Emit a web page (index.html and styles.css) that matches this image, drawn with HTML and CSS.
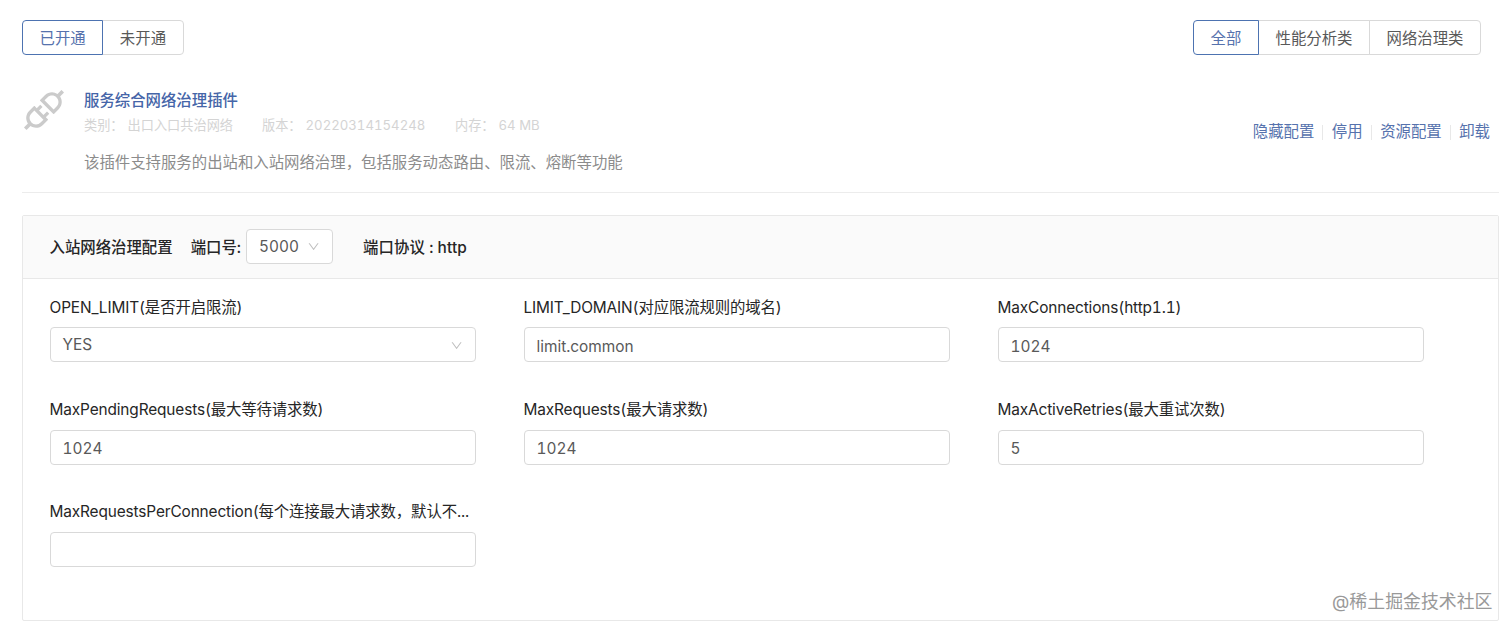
FILE: index.html
```
<!DOCTYPE html>
<html lang="zh-CN">
<head>
<meta charset="UTF-8">
<meta name="viewport" content="width=device-width, initial-scale=1.0">
<link rel="stylesheet" href="styles.css">
<title>插件</title>
</head>
<body>

  <header class="toolbar">
    <div class="tabs">
      <button class="tab tab-state active">已开通</button>
      <button class="tab tab-state">未开通</button>
    </div>
    <div class="tabs">
      <button class="tab tab-all active">全部</button>
      <button class="tab tab-type">性能分析类</button>
      <button class="tab tab-type">网络治理类</button>
    </div>
  </header>

  <section class="plugin">
    <svg class="plugin-icon" viewBox="0 0 1024 1024"><path d="M917.7 148.8l-42.4-42.4c-1.6-1.6-3.6-2.3-5.7-2.3s-4.1.8-5.7 2.3l-76.1 76.1a199.27 199.27 0 00-112.1-34.3c-51.2 0-102.4 19.5-141.5 58.6L432.3 308.7a8.03 8.03 0 000 11.3L704 591.7c1.6 1.6 3.6 2.3 5.7 2.3 2 0 4.1-.8 5.7-2.3l101.9-101.9c68.9-69 77-175.7 24.3-253.5l76.1-76.1c3.1-3.2 3.1-8.3 0-11.4zM769.1 441.7l-59.4 59.4-186.8-186.8 59.4-59.4c24.9-24.9 58.1-38.7 93.4-38.7 35.3 0 68.4 13.7 93.4 38.7 24.9 24.9 38.7 58.1 38.7 93.4 0 35.3-13.8 68.4-38.7 93.4zm-190.2 105a8.03 8.03 0 00-11.3 0L501 613.3 410.7 523l66.7-66.7c3.1-3.1 3.1-8.2 0-11.3L441 408.6a8.03 8.03 0 00-11.3 0L363 475.3l-43-43a7.85 7.85 0 00-5.7-2.3c-2 0-4.1.8-5.7 2.3L206.8 534.2c-68.9 69-77 175.7-24.3 253.5l-76.1 76.1a8.03 8.03 0 000 11.3l42.4 42.4c1.6 1.6 3.6 2.3 5.7 2.3s4.1-.8 5.7-2.3l76.1-76.1c33.7 22.9 72.9 34.3 112.1 34.3 51.2 0 102.4-19.5 141.5-58.6l101.9-101.9c3.1-3.1 3.1-8.2 0-11.3l-43-43 66.7-66.7c3.1-3.1 3.1-8.2 0-11.3l-36.6-36.2zM441.7 769.1a131.32 131.32 0 01-93.4 38.7c-35.3 0-68.4-13.7-93.4-38.7a131.32 131.32 0 01-38.7-93.4c0-35.3 13.7-68.4 38.7-93.4l59.4-59.4 186.8 186.8-59.4 59.4z"/></svg>
    <div class="plugin-info">
      <div class="plugin-name">服务综合网络治理插件</div>
      <div class="plugin-meta">
        <span class="meta-type"><span class="meta-key">类别：</span>出口入口共治网络</span>
        <span class="meta-version"><span class="meta-key">版本：</span>20220314154248</span>
        <span><span class="meta-key">内存：</span>64 MB</span>
      </div>
      <div class="plugin-desc">该插件支持服务的出站和入站网络治理，包括服务动态路由、限流、熔断等功能</div>
    </div>
    <div class="actions">
      <a>隐藏配置</a>
      <a>停用</a>
      <a>资源配置</a>
      <a>卸载</a>
    </div>
  </section>

  <main class="card">
    <div class="card-head">
      <span class="card-title">入站网络治理配置</span>
      <span class="port-label">端口号:</span>
      <div class="select select-port">
        <span>5000</span>
        <svg class="arrow" viewBox="0 0 1024 1024"><path d="M884 256h-75c-5.1 0-9.9 2.5-12.9 6.6L512 654.2 227.9 262.6c-3-4.1-7.8-6.6-12.9-6.6h-75c-6.5 0-10.3 7.4-6.5 12.7l352.6 486.1c12.8 17.6 39 17.6 51.7 0l352.6-486.1c3.9-5.3.1-12.7-6.4-12.7z"/></svg>
      </div>
      <span class="protocol">端口协议 : http</span>
    </div>
    <form class="card-body">
      <div class="field">
        <label class="label">OPEN_LIMIT(是否开启限流)</label>
        <div class="select">
          <span>YES</span>
          <svg class="arrow" viewBox="0 0 1024 1024"><path d="M884 256h-75c-5.1 0-9.9 2.5-12.9 6.6L512 654.2 227.9 262.6c-3-4.1-7.8-6.6-12.9-6.6h-75c-6.5 0-10.3 7.4-6.5 12.7l352.6 486.1c12.8 17.6 39 17.6 51.7 0l352.6-486.1c3.9-5.3.1-12.7-6.4-12.7z"/></svg>
        </div>
      </div>
      <div class="field">
        <label class="label">LIMIT_DOMAIN(对应限流规则的域名)</label>
        <input class="input" type="text" value="limit.common">
      </div>
      <div class="field">
        <label class="label">MaxConnections(http1.1)</label>
        <input class="input" type="text" value="1024">
      </div>
      <div class="field">
        <label class="label">MaxPendingRequests(最大等待请求数)</label>
        <input class="input" type="text" value="1024">
      </div>
      <div class="field">
        <label class="label">MaxRequests(最大请求数)</label>
        <input class="input" type="text" value="1024">
      </div>
      <div class="field">
        <label class="label">MaxActiveRetries(最大重试次数)</label>
        <input class="input" type="text" value="5">
      </div>
      <div class="field">
        <label class="label">MaxRequestsPerConnection(每个连接最大请求数，默认不...</label>
        <input class="input" type="text" value="">
      </div>
    </form>
  </main>

  <div class="watermark">@稀土掘金技术社区</div>

</body>
</html>
```
FILE: styles.css
```
* {
  box-sizing: border-box;
}
body {
  margin: 0;
  padding: 20px 13px 0 22px;
  height: 631px;
  overflow: hidden;
  background-color: #fff;
  color: #262626;
  font-family: Inter, "Noto Sans CJK SC", sans-serif;
  font-size: 15.4px;
  font-variant-numeric: tabular-nums;
  line-height: 24px;
}

/* 顶部切换按钮 */
.toolbar {
  display: flex;
  justify-content: space-between;
  padding-right: 18px;
}
.tabs {
  display: flex;
}
.tab {
  height: 35px;
  padding: 0 0 2px;
  border: 1px solid #d9d9d9;
  margin-left: -1px;
  background-color: #fff;
  color: #595959;
  font-family: inherit;
  font-size: 15.4px;
}
.tab:first-child {
  margin-left: 0;
  border-radius: 4px 0 0 4px;
}
.tab:last-child {
  border-radius: 0 4px 4px 0;
}
.tab.active {
  position: relative;
  border-color: #4d73b1;
  color: #5672ad;
}
.tab-state {
  width: 81.3px;
}
.tab-all {
  width: 66px;
}
.tab-type {
  width: 112px;
}

/* 插件信息 */
.plugin {
  display: flex;
  height: 138px;
  border-bottom: 1px solid #ececec;
}
.plugin-icon {
  width: 50px;
  height: 50px;
  margin: 30px 15.5px 0 -3.5px;
  fill: #cbcbcb;
}
.plugin-info {
  padding-top: 34px;
}
.plugin-name {
  color: #4565a8;
  font-weight: 500;
}
.plugin-meta {
  display: flex;
  color: #d4d4d4;
  font-size: 13.2px;
}
.meta-key {
  margin-right: 4px;
}
.meta-type {
  width: 178px;
}
.meta-version {
  width: 193px;
}
.plugin-desc {
  margin-top: 14px;
  color: #8c8c8c;
}
.actions {
  display: flex;
  align-items: center;
  height: 24px;
  margin: 65px 9px 0 auto;
  color: #5672ad;
}
.actions a + a {
  display: flex;
  align-items: center;
}
.actions a + a::before {
  content: "";
  width: 1px;
  height: 15px;
  margin: 0 8.5px 0 8px;
  background-color: #e8e8e8;
}

/* 配置卡片 */
.card {
  height: 406px;
  margin-top: 22px;
  border: 1px solid #e8e8e8;
  border-radius: 2px;
}
.card-head {
  display: flex;
  align-items: center;
  height: 63px;
  padding: 0 0 1px 26.5px;
  border-bottom: 1px solid #e8e8e8;
  background-color: #fafafa;
  font-weight: 500;
}
.card-head > span {
  padding-top: 2px;
}
.card-title {
  margin-right: 18px;
}
.port-label {
  margin-right: 5px;
}
.protocol {
  letter-spacing: 0.1px;
}
.card-body {
  display: grid;
  grid-template-columns: repeat(3, 426.5px);
  grid-auto-rows: 102.4px;
  column-gap: 47.5px;
  padding: 16.6px 0 0 26.5px;
}
.label {
  display: block;
  height: 24px;
  margin-bottom: 7.8px;
  white-space: nowrap;
  letter-spacing: -0.13px;
}
.input,
.select {
  width: 100%;
  height: 35px;
  padding: 1px 12px 0;
  border: 1px solid #d9d9d9;
  border-radius: 4px;
  background-color: #fff;
  color: #595959;
  font-family: inherit;
  font-size: 15.4px;
  font-variant-numeric: inherit;
  font-weight: 400;
}
.input {
  padding-top: 3px;
}
.select {
  display: flex;
  align-items: center;
  justify-content: space-between;
}
.select-port {
  width: 87px;
  margin-right: 30px;
}
.arrow {
  width: 13.2px;
  height: 13.2px;
  fill: #bfbfbf;
}

.watermark {
  position: absolute;
  right: 19.5px;
  bottom: 17px;
  color: #999;
  font-size: 17.9px;
}
```
